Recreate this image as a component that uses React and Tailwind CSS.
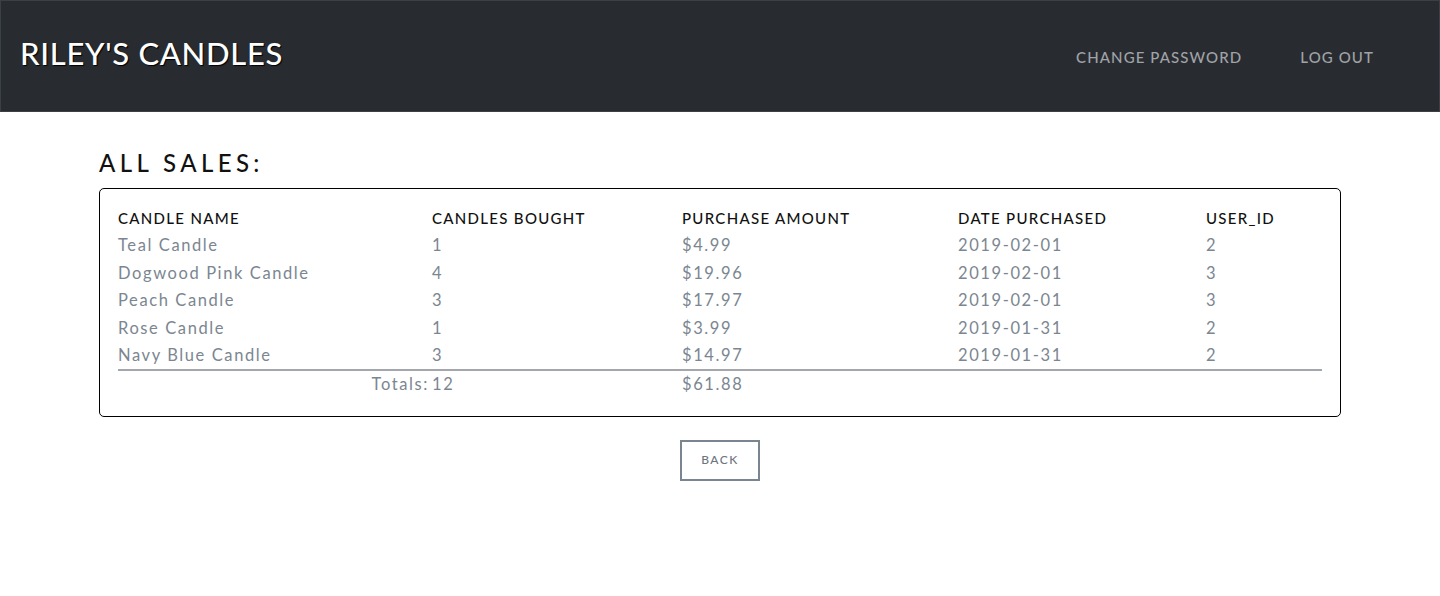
import React from "react";

const rows = [
  ["Teal Candle", "1", "$4.99", "2019-02-01", "2"],
  ["Dogwood Pink Candle", "4", "$19.96", "2019-02-01", "3"],
  ["Peach Candle", "3", "$17.97", "2019-02-01", "3"],
  ["Rose Candle", "1", "$3.99", "2019-01-31", "2"],
  ["Navy Blue Candle", "3", "$14.97", "2019-01-31", "2"],
];

export default function App() {
  return (
    <div className="min-h-[596px] bg-white" style={{ fontFamily: "Lato, 'Open Sans', sans-serif" }}>
      <header className="h-[112px] bg-[#282c31] border border-[#3b4046] flex items-center justify-between pl-[19px] pr-[65px]">
        <h1 className="text-[31px] text-white font-medium tracking-[0.7px] mt-[-6px] [text-shadow:1px_1px_1px_#000]">
          RILEY'S CANDLES
        </h1>
        <nav className="flex items-center gap-[58px] text-[15px] text-[#a0a3a7] tracking-[1.1px] font-medium mt-[2px]">
          <a>CHANGE PASSWORD</a>
          <a>LOG OUT</a>
        </nav>
      </header>
      <main className="px-[99px] pt-[38px]">
        <h2 className="text-[24px] tracking-[4.4px] text-[#111] leading-[26px] mb-[12px] font-medium">ALL SALES:</h2>
        <div className="border border-black rounded-[5px] px-[18px] pt-[16px] pb-[18px]">
          <table className="w-full border-collapse text-[16.5px] tracking-[1.6px] table-fixed">
            <colgroup>
              <col className="w-[314px]" />
              <col className="w-[250px]" />
              <col className="w-[276px]" />
              <col className="w-[248px]" />
              <col />
            </colgroup>
            <thead>
              <tr className="h-[27px] text-[15px] text-[#111] tracking-[1.3px] text-left">
                <th className="font-medium">CANDLE NAME</th>
                <th className="font-medium">CANDLES BOUGHT</th>
                <th className="font-medium">PURCHASE AMOUNT</th>
                <th className="font-medium">DATE PURCHASED</th>
                <th className="font-medium">USER_ID</th>
              </tr>
            </thead>
            <tbody className="text-[#7b8691]">
              {rows.map((r) => (
                <tr key={r[0]} className="h-[27.5px]">
                  {r.map((c, i) => (
                    <td key={i}>{c}</td>
                  ))}
                </tr>
              ))}
              <tr className="h-[28px] border-t-2 border-[#a3a7ab] text-[#7b8691]">
                <td className="text-right pr-[3px]">Totals:</td>
                <td>12</td>
                <td>$61.88</td>
                <td></td>
                <td></td>
              </tr>
            </tbody>
          </table>
        </div>
        <div className="flex justify-center mt-[23px]">
          <button className="w-[80px] h-[41px] border-2 border-[#7a8590] text-[12px] tracking-[1.5px] text-[#6c7680] font-medium">
            BACK
          </button>
        </div>
      </main>
    </div>
  );
}
